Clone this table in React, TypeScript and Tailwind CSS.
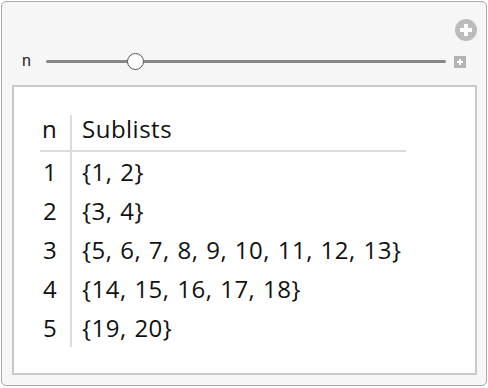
import React from "react";

const rows: [number, number[]][] = [
  [1, [1, 2]],
  [2, [3, 4]],
  [3, [5, 6, 7, 8, 9, 10, 11, 12, 13]],
  [4, [14, 15, 16, 17, 18]],
  [5, [19, 20]],
];

const cellFont = "font-['Open_Sans','Noto_Sans',sans-serif] text-[24px] leading-[28px] tracking-[0.5px] whitespace-nowrap text-[#111]";

const PlusCircle = () => (
  <svg width="22" height="22" viewBox="0 0 22 22">
    <circle cx="11" cy="11" r="11" fill="#bcbcbc" />
    <rect x="5" y="9" width="12" height="4" fill="#fff" />
    <rect x="9" y="5" width="4" height="12" fill="#fff" />
  </svg>
);

const PlusBox = () => (
  <svg width="12" height="12" viewBox="0 0 12 12">
    <rect width="12" height="12" fill="#b3b3b3" />
    <rect x="3" y="5" width="6" height="2" fill="#fff" />
    <rect x="5" y="3" width="2" height="6" fill="#fff" />
  </svg>
);

export default function App() {
  return (
    <div className="w-[488px] h-[388px] bg-white p-px">
      <div className="w-[486px] h-[385px] rounded-[5px] border border-[#a8a8a8] bg-[#f6f6f6] flex flex-col">
        {/* expand button */}
        <div className="flex justify-end pt-[17px] pr-[9px]">
          <PlusCircle />
        </div>

        {/* slider control */}
        <div className="flex items-center h-[20px] mt-[10px] pl-[20px]">
          <span className="w-[12px] font-['Liberation_Sans',Arial,sans-serif] text-[16px] leading-none text-[#222]">n</span>
          <div className="relative ml-[12px] w-[400px] h-[3px] rounded-full bg-[#878787]">
            <div className="absolute left-[81px] top-[-7px] w-[17px] h-[17px] rounded-full border border-[#555] bg-white" />
          </div>
          <div className="ml-[8px] mt-px">
            <PlusBox />
          </div>
        </div>

        {/* output panel */}
        <div className="flex-1 mt-[14px] ml-[10px] mr-[9px] mb-[10px] border-2 border-[#c9c9c9] bg-white pl-[26px] pt-[28px]">
          <div className="grid grid-cols-[30px_336px]">
            <div className={`h-[37px] pl-[2px] border-b-2 border-[#dcdcdc] ${cellFont}`}>n</div>
            <div className={`h-[37px] pl-[10px] border-l-2 border-b-2 border-[#dcdcdc] ${cellFont}`}>Sublists</div>
            {rows.map(([n, list]) => (
              <React.Fragment key={n}>
                <div className={`h-[39px] flex items-center pl-[3px] ${cellFont}`}>{n}</div>
                <div className={`h-[39px] flex items-center pl-[10px] border-l-2 border-[#dcdcdc] [word-spacing:1px] ${cellFont}`}>
                  {"{" + list.join(", ") + "}"}
                </div>
              </React.Fragment>
            ))}
          </div>
        </div>
      </div>
    </div>
  );
}
